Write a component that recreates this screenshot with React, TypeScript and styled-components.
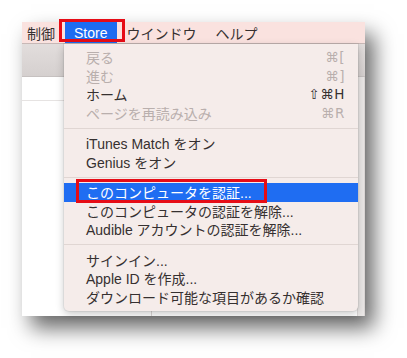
import React from "react";
import styled, { createGlobalStyle } from "styled-components";

const GlobalStyle = createGlobalStyle`
  html, body {
    margin: 0;
    padding: 0;
    background: #fff;
  }
  body {
    width: 407px;
    height: 358px;
    overflow: hidden;
    font-family: "Liberation Sans", "Noto Sans CJK JP", sans-serif;
  }
`;

const Page = styled.div`
  padding: 22px 0 0 22px;
`;

const Window = styled.div`
  position: relative;
  width: 343px;
  height: 294px;
  background: #fff;
  box-shadow: 9px 12px 20px rgba(0, 0, 0, 0.6);
  display: flex;
  flex-direction: column;
`;

const MenuBar = styled.div`
  height: 21px;
  display: flex;
  align-items: center;
  background: #fae2df;
  border-bottom: 1px solid #c8b8b6;
  font-size: 14px;
  color: #363131;
`;

const BarItem = styled.div<{ $active?: boolean; $first?: boolean }>`
  position: relative;
  height: 100%;
  display: flex;
  align-items: center;
  padding: 0 9.5px 0 ${(p) => (p.$first ? "5px" : "9.5px")};
  background: ${(p) => (p.$active ? "#1d6cf1" : "transparent")};
  color: ${(p) => (p.$active ? "#fff" : "inherit")};
`;

const Callout = styled.span<{ $top: number; $left: number; $w: number; $h: number }>`
  position: absolute;
  top: ${(p) => p.$top}px;
  left: ${(p) => p.$left}px;
  width: ${(p) => p.$w}px;
  height: ${(p) => p.$h}px;
  box-sizing: border-box;
  border: 3px solid #e60c16;
  pointer-events: none;
`;

const Toolbar = styled.div`
  height: 32px;
  background: linear-gradient(#e2dddc, #d5d0cf);
  border-bottom: 1px solid #c6c1c0;
`;

const Content = styled.div`
  flex: 1;
  display: grid;
  grid-template-columns: 130px 1fr 7px;
`;

const Pane = styled.div<{ $edge?: boolean }>`
  border-right: 1px solid #dcd8d7;
  background: ${(p) => (p.$edge ? "#ebe8e7" : "#fff")};
`;

const PaneRow = styled.div`
  height: 23px;
  border-bottom: 1px solid #e6e3e2;
`;

const Dropdown = styled.div`
  position: absolute;
  top: 22px;
  left: 42px;
  width: 294px;
  padding: 4px 0 5px;
  background: #f5ecea;
  border-radius: 0 0 5px 5px;
  box-shadow: 0 3px 8px rgba(0, 0, 0, 0.22), 0 0 0 1px rgba(0, 0, 0, 0.05);
  font-size: 14px;
`;

const Item = styled.div<{ $disabled?: boolean; $selected?: boolean }>`
  position: relative;
  height: 18.5px;
  display: flex;
  align-items: center;
  justify-content: space-between;
  padding: 0 13px 0 22px;
  white-space: nowrap;
  color: ${(p) => (p.$selected ? "#fff" : p.$disabled ? "#b9afad" : "#363030")};
  background: ${(p) => (p.$selected ? "#1f6df2" : "transparent")};
`;

const Shortcut = styled.span`
  font-family: "DejaVu Sans", "Liberation Sans", sans-serif;
  font-size: 13.5px;
  letter-spacing: 0.5px;
`;

const Separator = styled.div`
  height: 1px;
  margin: 5.5px 0;
  background: #e0d6d3;
`;

type Entry =
  | { sep: true }
  | { label: string; key?: string; disabled?: boolean; selected?: boolean; sep?: false };

const entries: Entry[] = [
  { label: "戻る", key: "⌘[", disabled: true },
  { label: "進む", key: "⌘]", disabled: true },
  { label: "ホーム", key: "⇧⌘H" },
  { label: "ページを再読み込み", key: "⌘R", disabled: true },
  { sep: true },
  { label: "iTunes Match をオン" },
  { label: "Genius をオン" },
  { sep: true },
  { label: "このコンピュータを認証...", selected: true },
  { label: "このコンピュータの認証を解除..." },
  { label: "Audible アカウントの認証を解除..." },
  { sep: true },
  { label: "サインイン..." },
  { label: "Apple ID を作成..." },
  { label: "ダウンロード可能な項目があるか確認" },
];

export default function App() {
  return (
    <>
      <GlobalStyle />
      <Page>
        <Window>
          <MenuBar>
            <BarItem $first>制御</BarItem>
            <BarItem $active>
              Store
              <Callout $top={-3} $left={-6} $w={66} $h={23} />
            </BarItem>
            <BarItem>ウインドウ</BarItem>
            <BarItem>ヘルプ</BarItem>
          </MenuBar>
          <Toolbar />
          <Content>
            <Pane>
              <PaneRow />
            </Pane>
            <Pane>
              <PaneRow />
            </Pane>
            <Pane $edge />
          </Content>
          <Dropdown>
            {entries.map((e, i) =>
              e.sep ? (
                <Separator key={i} />
              ) : (
                <Item key={i} $disabled={e.disabled} $selected={e.selected}>
                  <span>{e.label}</span>
                  {e.key && <Shortcut>{e.key}</Shortcut>}
                  {e.selected && <Callout $top={-4} $left={12} $w={191} $h={24} />}
                </Item>
              )
            )}
          </Dropdown>
        </Window>
      </Page>
    </>
  );
}
